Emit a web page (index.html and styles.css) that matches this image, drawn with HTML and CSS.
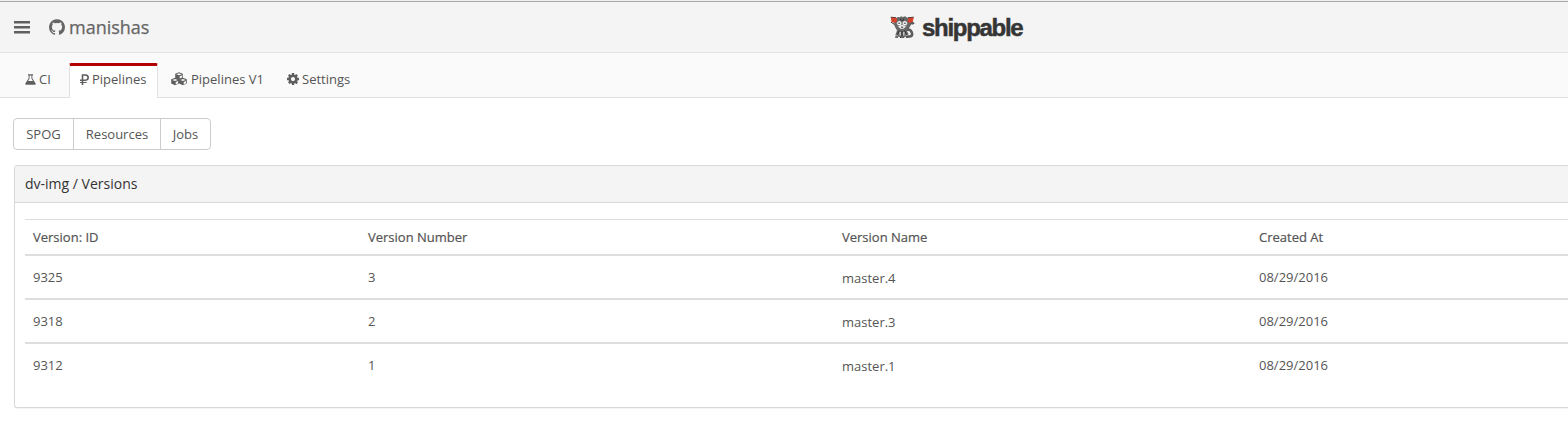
FILE: index.html
```
<!DOCTYPE html>
<html lang="en">
<head>
<meta charset="utf-8">
<title>Shippable</title>
<link rel="stylesheet" href="styles.css">
</head>
<body>
<header class="topbar">
  <div class="account">
    <svg class="menu" viewBox="0 0 16 14"><path d="M0 1h16v2.600H0zM0 6h16v2.600H0zM0 11h16v2.600H0z"/></svg>
    <svg class="github" viewBox="0 128 1536 1500"><path d="M768 128q209 0 385.500 103t279.500 279.500 103 385.500q0 251-146.500 451.500t-378.500 277.500q-27 5-40-7t-13-30q0-3 .5-76.500t.5-134.500q0-97-52-142 57-6 102.500-18t94-39 81-66.500 53-105 20.500-150.500q0-119-79-206 37-91-8-204-28-9-81 11t-92 44l-38 24q-93-26-192-26t-192 26q-16-11-42.500-27t-83.500-38.500-85-13.500q-45 113-8 204-79 87-79 206 0 85 20.500 150t52.500 105 80.500 67 94 39 102.500 18q-39 36-49 103-21 10-45 15t-57 5-65.500-21.500-55.500-62.500q-19-32-48.500-52t-49.500-24l-20-3q-21 0-29 4.500t-5 11.500 9 14 13 12l7 5q22 10 43.500 38t31.500 51l10 23q13 38 44 61.500t67 30 69.500 7 55.500-3.500l23-4q0 38 .5 88.500t.5 54.500q0 18-13 30t-40 7q-232-77-378.500-277.500t-146.500-451.500q0-209 103-385.500t279.500-279.500 385.500-103z"/></svg>
    <span class="name">manishas</span>
  </div>
  <div class="brand">
    <svg class="mascot" viewBox="0 0 26 24">
      <path class="tail" d="M16.500 20.300q6.500 1 5.500-3t-3.500-3.500 .5-4.300 4.500-1.200"/>
      <path class="fur" d="M6 2 8 1 10 1.200 11 .2 13 1 15 .2 17 1.500 19.500 2.500 20 8 17.500 12 17 15 18.500 18 18 20.500 15 20.800 12 22.300 9 20.800 6 20.800 5.500 18.500 7 14.500 4.500 10 4 6z"/>
      <path class="edge" d="M.8 1.200 6 1.800M23.800 1.200 18 1.800M1 6l3.500 2.500"/>
      <path class="ear" d="M.8 1.600 6.500 2 7 5.500 4.500 7 1.500 5.800zM23.800 1.600 18.500 2 17.500 5.500 19.500 7 22.800 5.800z"/>
      <circle class="eye" cx="9.300" cy="7.300" r="2.500"/><circle class="eye" cx="14.800" cy="7.300" r="2.500"/>
      <path class="face" d="M8 10.500 12 8.800 16 10.500 13.500 12.800h-3z"/>
      <path class="edge" d="M8.200 7.200h2M13.800 7.200h2M11 11.200h2.200M9.300 14.500l-2 4.500M14.700 14.500l2 4.500M12 15v5.500M5 21l3 .3M10 22l1-1M13.200 22l1-1M16 21.300l2.500-.5M10 2.500l1.500 2.300M14 2.500l-1.500 2.300"/>
      <path class="face" d="M9.600 16h1.100v3.500H9.600zM13.300 16h1.100v3.500h-1.100zM6.500 18.800h1v1h-1zM16.500 18.800h1v1h-1z"/>
    </svg>
    <span class="wordmark">shippable</span>
  </div>
</header>
<nav class="tabs">
  <a class="tab tab-ci"><svg class="flask" viewBox="0 0 12 12"><path fill-rule="evenodd" d="M3.300.3h5.400v1.200H8v3.200l3.500 5.500q.8 1.500-1 1.500H1.500q-1.800 0-1-1.500L4 4.700V1.500h-.7zM5 1.500V5L3.400 7.600h5.200L7 5V1.500z"/></svg><span>CI</span></a>
  <a class="tab tab-active"><svg class="ruble" viewBox="0 0 9 11"><path fill-rule="evenodd" d="M1.700.3H5.600Q9 .5 9 3.600T5.600 6.900H3.300v1h3.400v1.200H3.300V11H1.700V9.100H0V7.900h1.700v-1H0V5.500h1.700zM3.300 1.700v3.800h2.200Q7.300 5.400 7.300 3.600T5.500 1.700z"/></svg><span>Pipelines</span></a>
  <a class="tab tab-v1">
    <svg class="cubes" viewBox="0 0 16 14">
      <path d="M8 .3 11.800 1.700V5.700L15.800 7.300V11.500L12 13.300 8 11.500 4 13.300.2 11.500V7.300L4.200 5.700V1.700z"/>
      <path class="cuts" d="M5.300 2.300 8 1.300l2.700 1L8 3.300zM8.700 4.300l2.400-1v2.200l-2.400 1zM1.300 8 4 6.900 6.700 8 4 9.100zM4.700 10.100l2.400-1v2.100l-2.400 1.200zM9.300 8 12 6.900 14.700 8 12 9.100zM12.700 10.100l2.400-1v2.100l-2.400 1.200z"/>
    </svg>
    <span>Pipelines V1</span></a>
  <a class="tab tab-settings"><svg class="cog" viewBox="0 128 1536 1536"><path d="M1024 896q0-106-75-181t-181-75-181 75-75 181 75 181 181 75 181-75 75-181zm512-109v222q0 12-8 23t-20 13l-185 28q-19 54-39 91 35 50 107 138 10 12 10 25t-9 23q-27 37-99 108t-94 71q-12 0-26-9l-138-108q-44 23-91 38-16 136-29 186-7 28-36 28h-222q-14 0-24.500-8.500t-11.500-21.500l-28-184q-49-16-90-37l-141 107q-10 9-25 9-14 0-25-11-126-114-165-168-7-10-7-23 0-12 8-23 15-21 51-66.500t54-70.500q-27-50-41-99l-183-27q-13-2-21-12.500t-8-23.500v-222q0-12 8-23t19-13l186-28q14-46 39-92-40-57-107-138-10-12-10-24 0-10 9-23 26-36 98.500-107.500t94.500-71.500q13 0 26 10l138 107q44-23 91-38 16-136 29-186 7-28 36-28h222q14 0 24.500 8.500t11.500 21.500l28 184q49 16 90 37l142-107q9-9 24-9 13 0 25 10 129 119 165 170 7 8 7 22 0 12-8 23-15 21-51 66.500t-54 70.500q26 50 41 98l183 28q13 2 21 12.500t8 23.500z"/></svg><span>Settings</span></a>
</nav>
<main class="content">
  <div class="btn-group"><button class="btn btn-spog">SPOG</button><button class="btn btn-resources">Resources</button><button class="btn btn-jobs">Jobs</button></div>
  <section class="panel">
    <h1 class="panel-heading">dv-img / Versions</h1>
    <div class="panel-body">
      <div class="row row-head"><span>Version: ID</span><span>Version Number</span><span>Version Name</span><span>Created At</span></div>
      <div class="row"><span>9325</span><span>3</span><span class="version">master.4</span><span>08/29/2016</span></div>
      <div class="row"><span>9318</span><span>2</span><span class="version">master.3</span><span>08/29/2016</span></div>
      <div class="row"><span>9312</span><span>1</span><span class="version">master.1</span><span>08/29/2016</span></div>
    </div>
  </section>
</main>
</body>
</html>
```
FILE: styles.css
```
* { box-sizing: border-box; }
body {
  margin: 0;
  height: 439px;
  overflow: hidden;
  background: #fff;
  color: #555;
  font: 13px/18px "Open Sans", sans-serif;
}
svg { display: block; flex: none; fill: #5f5f5f; }
.topbar {
  height: 53px;
  padding-top: 1px;
  border-top: 1px solid #f0f0f0;
  border-bottom: 1px solid #e3e3e3;
  background: #f4f4f4;
  box-shadow: inset 0 1px #aaa;
  display: grid;
  grid-template-columns: 890px 1fr;
}
.account { display: flex; align-items: center; padding-left: 14px; }
.menu { width: 16px; height: 14px; }
.github { width: 16px; height: 16px; margin-left: 19px; fill: #666; }
.name { margin-left: 4px; font-size: 18px; line-height: 24px; color: #666; -webkit-text-stroke: .25px #666; }
.brand { display: flex; align-items: center; padding-top: 2px; }
.mascot { width: 26px; height: 24px; }
.fur { fill: #686868; }
.tail { fill: none; stroke: #5c5c5c; stroke-width: 2.6; }
.ear { fill: #d5432b; }
.edge { fill: none; stroke: #2d2d2d; stroke-width: 1; }
.eye { fill: #fff; stroke: #555; stroke-width: .5; }
.face { fill: #eee; }
.wordmark {
  margin: 0 0 0 6px;
  font: bold 24px/30px "Liberation Sans", Arial, sans-serif;
  letter-spacing: -1.3px;
  color: #353535;
  -webkit-text-stroke: .5px #353535;
}
.tabs {
  height: 45px;
  background: #fafafa;
  box-shadow: inset 0 -1px #e1e1e1;
  display: flex;
  align-items: flex-end;
}
.tab { display: flex; align-items: center; height: 35px; padding-bottom: 3px; white-space: nowrap; }
.tab-ci { width: 69px; padding-left: 25px; gap: 3px; }
.tab-active {
  width: 89px;
  padding: 0 0 6px 10px;
  gap: 3px;
  background: #fff;
  border: 1px solid #e1e1e1;
  border-top: 3px solid #b30000;
  border-bottom: 0;
  border-radius: 2px 2px 0 0;
}
.tab-v1 { width: 129px; padding-left: 13px; gap: 4px; }
.tab-settings { gap: 3px; }
.flask { width: 11px; height: 11px; }
.ruble { width: 9px; height: 11px; }
.cubes { width: 16px; height: 14px; }
.cuts { fill: #f4f4f4; }
.cog { width: 12px; height: 12px; }
.content { padding: 20px 0 0 13px; }
.btn-group { display: flex; width: 198px; height: 32px; border: 1px solid #ccc; border-radius: 4px; }
.btn { padding: 0; border: 0; background: none; color: inherit; font: inherit; }
.btn + .btn { border-left: 1px solid #ccc; }
.btn-spog { width: 59px; }
.btn-resources { width: 87px; }
.btn-jobs { width: 50px; }
.panel {
  height: 243px;
  margin: 15px 0 0 1px;
  border: 1px solid #d8d8d8;
  border-right: 0;
  border-radius: 3px 0 0 3px;
  box-shadow: 0 1px 1px rgba(0, 0, 0, .05);
}
.panel-heading {
  margin: 0;
  height: 37px;
  padding: 9px 10px;
  border-bottom: 1px solid #d8d8d8;
  background: #f4f4f4;
  color: #333;
  font-size: 14px;
  font-weight: 400;
  line-height: 18px;
}
.panel-body { padding: 16px 0 0 10px; }
.row {
  display: grid;
  grid-template-columns: 335px 474px 417px 1fr;
  height: 44px;
  padding: 12px 0 0 8px;
  border-top: 2px solid #ddd;
}
.row-head { height: 35px; padding-top: 8px; border-top-width: 1px; -webkit-text-stroke: .2px #555; }
.version { padding-top: 1px; }
```
